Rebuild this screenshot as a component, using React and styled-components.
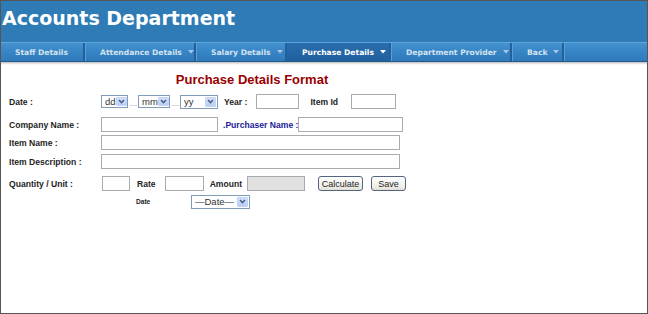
import styled, { createGlobalStyle } from 'styled-components';

const GlobalStyle = createGlobalStyle`
  html, body {
    margin: 0;
    padding: 0;
    background: #fff;
  }
  body {
    font-family: "Liberation Sans", Arial, sans-serif;
  }
`;

const menu = [
  { name: 'Staff Details', w: 84 },
  { name: 'Attendance Details', w: 111, drop: true },
  { name: 'Salary Details', w: 91, drop: true },
  { name: 'Purchase Details', w: 104, drop: true, active: true },
  { name: 'Department Provider', w: 121, drop: true },
  { name: 'Back', w: 52, drop: true },
];

const Chevron = () => (
  <svg width="9" height="9" viewBox="0 0 9 9">
    <polyline points="2,3 4.5,5.5 7,3" fill="none" stroke="#4d6185" strokeWidth="1.6" />
  </svg>
);

const Caret = () => (
  <svg width="6" height="4" viewBox="0 0 6 4">
    <polygon points="0,0 6,0 3,3.5" fill="currentColor" />
  </svg>
);

const FakeSelect = ({ value, w, h }) => (
  <SelectBox $w={w} $h={h}>
    <span>{value}</span>
    <ArrowBtn>
      <Chevron />
    </ArrowBtn>
  </SelectBox>
);

const App = () => {
  return (
    <>
      <GlobalStyle />
      <Frame>
        <Header>
          <Title>Accounts Department</Title>
        </Header>
        <Nav>
          {menu.map((item) => (
            <NavItem key={item.name} $w={item.w} $active={item.active}>
              {item.name}
              {item.drop && (
                <CaretWrap $active={item.active}>
                  <Caret />
                </CaretWrap>
              )}
            </NavItem>
          ))}
        </Nav>
        <Shadow />

        <Form>
          <FormTitle>Purchase Details Format</FormTitle>

          <Row $mt={5}>
            <Label>Date :</Label>
            <FakeSelect value="dd" w={27} />
            <Dots>.....</Dots>
            <FakeSelect value="mm" w={32} />
            <Dots>.....</Dots>
            <FakeSelect value="yy" w={38} h={14} />
            <Text $ml={6}>Year :</Text>
            <Input $w={43} $ml={9} />
            <Text $ml={11}>Item Id</Text>
            <Input $w={45} $ml={13} />
          </Row>

          <Row $mt={6}>
            <Label>Company Name :</Label>
            <Input $w={117} />
            <Text $ml={5} $blue>.Purchaser Name :</Text>
            <Input $w={105} $ml={0} />
          </Row>

          <Row $mt={1}>
            <Label>Item Name :</Label>
            <Input $w={299} />
          </Row>

          <Row $mt={2}>
            <Label>Item Description :</Label>
            <Input $w={299} />
          </Row>

          <Row $mt={5}>
            <Label>Quantity / Unit :</Label>
            <Input $w={28} $ml={1} />
            <Text $ml={7}>Rate</Text>
            <Input $w={39} $ml={9} />
            <Text $ml={6}>Amount</Text>
            <Input $w={58} $ml={5} disabled $grey />
            <Button $w={45} $ml={13}>Calculate</Button>
            <Button $w={35} $ml={8}>Save</Button>
          </Row>

          <Row $mt={1}>
            <Spacer />
            <SmallText>Date</SmallText>
            <SelectSpacer />
            <FakeSelect value="—Date—" w={59} h={14} />
          </Row>
        </Form>
      </Frame>
    </>
  );
};

export default App;

const Frame = styled.div`
  width: 648px;
  height: 314px;
  box-sizing: border-box;
  border: 1px solid #555;
  background: #fff;
  overflow: hidden;
`;

const Header = styled.header`
  height: 41px;
  background: #2e7bb5;
  box-sizing: border-box;
  padding: 6px 0 0 1px;
`;

const Title = styled.h1`
  margin: 0;
  font-family: "DejaVu Sans", Verdana, sans-serif;
  font-weight: bold;
  font-size: 19px;
  line-height: 22px;
  color: #fff;
  letter-spacing: 0;
`;

const Nav = styled.nav`
  display: flex;
  height: 20px;
  box-sizing: border-box;
  border-top: 1px solid #5ea4dc;
  border-bottom: 1px solid #22598c;
  background: linear-gradient(#4591d0, #3886c6 45%, #2f7aba);
`;

const NavItem = styled.div`
  width: ${(p) => p.$w}px;
  box-sizing: border-box;
  display: flex;
  align-items: center;
  padding-left: 15px;
  font-family: "DejaVu Sans", Verdana, sans-serif;
  font-weight: bold;
  font-size: 7.6px;
  color: ${(p) => (p.$active ? '#ffffff' : '#d3e2ef')};
  background: ${(p) => (p.$active ? 'linear-gradient(#2a6eae, #1f609f)' : 'transparent')};
  border-right: 1px solid #235f98;
  box-shadow: inset -1px 0 0 #23609a, 1px 0 0 #5b9dd4;
  white-space: nowrap;
  &:first-child {
    padding-left: 14px;
  }
`;

const CaretWrap = styled.span`
  display: flex;
  margin-left: 6px;
  color: ${(p) => (p.$active ? '#ffffff' : '#a9c7e2')};
`;

const Shadow = styled.div`
  height: 3px;
  background: linear-gradient(#bdbdbd, #ececec 60%, #fff);
`;

const Form = styled.div`
  width: 494px;
  box-sizing: border-box;
  padding-left: 8px;
`;

const FormTitle = styled.h2`
  margin: 7px 0 0 0;
  text-align: center;
  font-family: "Liberation Sans", Arial, sans-serif;
  font-size: 13px;
  line-height: 16px;
  font-weight: bold;
  color: #990000;
`;

const Row = styled.div`
  display: flex;
  align-items: center;
  height: 17px;
  margin-top: ${(p) => p.$mt}px;
`;

const Label = styled.span`
  width: 92px;
  flex: none;
  font-size: 8.6px;
  font-weight: bold;
  color: #1e1e1e;
  white-space: nowrap;
`;

const Text = styled.span`
  margin-left: ${(p) => p.$ml}px;
  font-size: 8.6px;
  font-weight: bold;
  color: ${(p) => (p.$blue ? '#1c1c96' : '#1e1e1e')};
  white-space: nowrap;
`;

const SmallText = styled.span`
  width: 15px;
  font-size: 6.6px;
  font-weight: bold;
  color: #1e1e1e;
`;

const Spacer = styled.span`
  width: 127px;
  flex: none;
`;

const SelectSpacer = styled.span`
  width: 40px;
  flex: none;
`;

const Input = styled.input`
  width: ${(p) => p.$w}px;
  height: 15px;
  margin: 0 0 0 ${(p) => p.$ml || 0}px;
  padding: 0 2px;
  box-sizing: border-box;
  border: 1px solid #a9abb0;
  background: ${(p) => (p.$grey ? '#e1e1e1' : '#fff')};
  flex: none;
  outline: none;
`;

const SelectBox = styled.div`
  width: ${(p) => p.$w}px;
  height: ${(p) => p.$h || 13}px;
  box-sizing: border-box;
  border: 1px solid #7f9db9;
  background: #fff;
  display: flex;
  align-items: center;
  justify-content: space-between;
  padding: 1px 1px 1px 3px;
  flex: none;
  font-size: 9.5px;
  color: #333;
  span {
    line-height: 10px;
    white-space: nowrap;
  }
`;

const ArrowBtn = styled.div`
  width: 11px;
  height: 100%;
  box-sizing: border-box;
  display: flex;
  align-items: center;
  justify-content: center;
  background: linear-gradient(#d3e0fb, #b9cdf6);
  border: 1px solid #c3d3f7;
  border-radius: 1px;
`;

const Dots = styled.span`
  width: 10px;
  flex: none;
  text-align: center;
  font-size: 7px;
  color: #999;
  letter-spacing: -0.5px;
  align-self: flex-end;
  line-height: 12px;
`;

const Button = styled.button`
  width: ${(p) => p.$w}px;
  height: 15px;
  margin-left: ${(p) => p.$ml}px;
  padding: 0;
  box-sizing: border-box;
  border: 1px solid #55657e;
  border-radius: 3px;
  background: linear-gradient(#ffffff, #f0efe8 70%, #e2e0d6);
  font-family: "Liberation Sans", Arial, sans-serif;
  font-size: 9px;
  color: #222;
  flex: none;
`;
